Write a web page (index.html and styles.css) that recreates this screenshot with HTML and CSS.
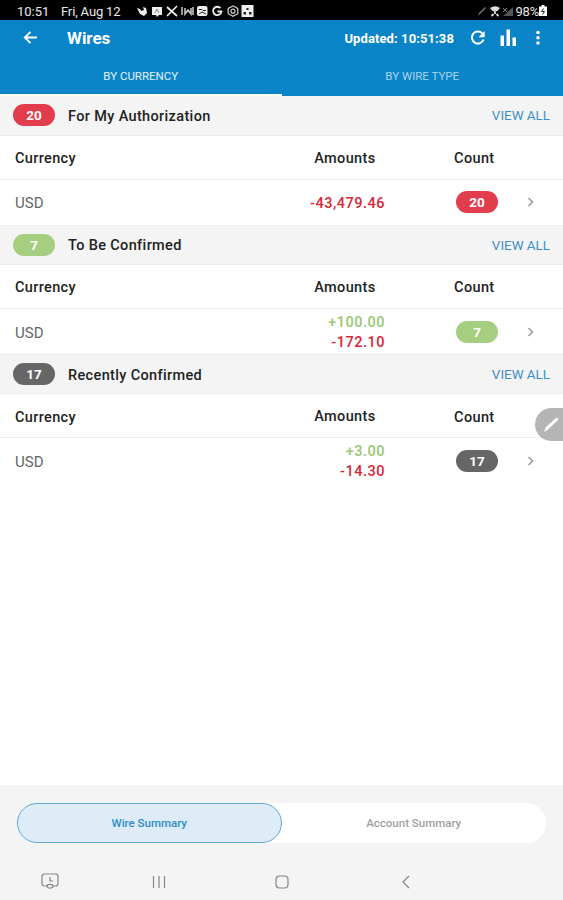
FILE: index.html
```html
<!DOCTYPE html>
<html lang="en">
<head>
    <meta charset="utf-8">
    <title>Wires</title>
    <link rel="stylesheet" href="styles.css">
</head>
<body>

    <div class="status-bar">
        <span class="status-time">10:51</span>
        <span class="status-date">Fri, Aug 12</span>
        <svg class="status-icons" width="118" height="14" viewBox="0 0 118 14" fill="#eee">
            <path d="M1 4l3 1 1 2 3-1-1-3 3 1 1 5-3 3-4-2z"/>
            <path d="M16 3h10v8h-3l-2 2-1-2h-4z"/>
            <path d="M19 9l2-4 2 4" stroke="#888" fill="none"/>
            <path d="M31 3l10 9M41 2L31 12" stroke="#eee" stroke-width="1.7" fill="none"/>
            <path d="M46 3v8M49 4v6l3-4 3 4V4M57 3v8" stroke="#ccc" stroke-width="1.5" fill="none"/>
            <rect x="61" y="2" width="10.5" height="10" rx="2"/>
            <path d="M63 5.500h3l1 1h3M63 10l3-2 4 2" stroke="#222" fill="none"/>
            <path d="M84.500 4.200A4.200 4.200 0 1 0 85.500 7.500H81.500" stroke="#eee" stroke-width="1.800" fill="none"/>
            <path d="M97 2l4.800 2.500v5.200L97 12.300l-4.800-2.600V4.500z" stroke="#ccc" stroke-width="1.300" fill="none"/>
            <circle cx="97" cy="7.200" r="2" stroke="#ccc" stroke-width="1.200" fill="none"/>
            <rect x="105.500" y="1" width="12" height="12"/>
            <path d="M110.500 4h2v2h-2zM107.500 8h2.500v2.500h-2.500zM113 8h2.500v2.500H113z" fill="#222"/>
        </svg>
        <svg class="status-signal" width="40" height="14" viewBox="0 0 40 14">
            <path d="M3 12l1-3 6-6 1 1-6 6z" fill="#777"/>
            <path d="M15 4q5-3.500 10 0l-3 3.500q-2-1.500-4 0z" fill="#ddd"/>
            <path d="M20 7v3M16.500 12l2-2M23.500 12l-2-2" stroke="#ddd" stroke-width="1.800" fill="none"/>
            <path d="M28 12L38 3v9z" fill="#555"/>
            <path d="M28 4l4 4M32 4l-4 4" stroke="#777" fill="none"/>
        </svg>
        <span class="status-battery">98%</span>
        <svg width="8" height="12" viewBox="0 0 8 12">
            <path d="M2.500 0h3v1.500H8V11H0V1.500h2.500z" fill="#fff"/>
            <path d="M4.500 3.500L2.500 6.500h3l-2 3" stroke="#222" fill="none"/>
        </svg>
    </div>

    <header>
        <div class="app-bar">
            <svg class="back" width="16" height="16" viewBox="0 0 16 16">
                <path d="M15 7.500H3M8.500 1.800L2.800 7.500l5.700 5.700" stroke="#fff" stroke-width="1.900" fill="none"/>
            </svg>
            <h1>Wires</h1>
            <span class="updated">Updated: 10:51:38</span>
            <svg class="refresh" width="16" height="16" viewBox="0 0 16 16">
                <path d="M12.200 3.300A6 6 0 1 0 13.600 9.500" stroke="#fff" stroke-width="2" fill="none"/>
                <path d="M14.700 1v6.200H8.500z" fill="#fff"/>
            </svg>
            <svg class="chart" width="18" height="18" viewBox="0 0 18 18" fill="#fff">
                <rect x="0.500" y="6.500" width="3.500" height="10.500"/>
                <rect x="6.500" y="0.500" width="3.500" height="16.500"/>
                <rect x="12.500" y="8.500" width="3.500" height="8.500"/>
            </svg>
            <svg class="more" width="4" height="16" viewBox="0 0 4 16" fill="#fff">
                <circle cx="2" cy="2.500" r="1.800"/>
                <circle cx="2" cy="7.700" r="1.800"/>
                <circle cx="2" cy="13" r="1.800"/>
            </svg>
        </div>
        <div class="tabs">
            <a class="tab active">BY CURRENCY</a>
            <a class="tab">BY WIRE TYPE</a>
        </div>
    </header>

    <main>
        <section>
            <div class="section-head">
                <span class="badge red">20</span>
                <h2>For My Authorization</h2>
                <a class="view-all">VIEW ALL</a>
            </div>
            <div class="row labels">
                <span>Currency</span>
                <span class="amounts">Amounts</span>
                <span class="count">Count</span>
            </div>
            <div class="row">
                <span class="currency">USD</span>
                <div class="amounts"><p class="minus">-43,479.46</p></div>
                <div class="count"><span class="badge red">20</span></div>
                <svg class="chevron" width="8" height="10" viewBox="0 0 8 10"><path d="M1.500 1l4 4-4 4"/></svg>
            </div>
        </section>

        <section>
            <div class="section-head">
                <span class="badge green">7</span>
                <h2>To Be Confirmed</h2>
                <a class="view-all">VIEW ALL</a>
            </div>
            <div class="row labels">
                <span>Currency</span>
                <span class="amounts">Amounts</span>
                <span class="count">Count</span>
            </div>
            <div class="row">
                <span class="currency">USD</span>
                <div class="amounts"><p class="plus">+100.00</p><p class="minus">-172.10</p></div>
                <div class="count"><span class="badge green">7</span></div>
                <svg class="chevron" width="8" height="10" viewBox="0 0 8 10"><path d="M1.500 1l4 4-4 4"/></svg>
            </div>
        </section>

        <section>
            <div class="section-head">
                <span class="badge gray">17</span>
                <h2>Recently Confirmed</h2>
                <a class="view-all">VIEW ALL</a>
            </div>
            <div class="row labels">
                <span>Currency</span>
                <span class="amounts">Amounts</span>
                <span class="count">Count</span>
            </div>
            <div class="row">
                <span class="currency">USD</span>
                <div class="amounts"><p class="plus">+3.00</p><p class="minus">-14.30</p></div>
                <div class="count"><span class="badge gray">17</span></div>
                <svg class="chevron" width="8" height="10" viewBox="0 0 8 10"><path d="M1.500 1l4 4-4 4"/></svg>
            </div>
        </section>
    </main>

    <!-- Floating pen button -->
    <div class="pen">
        <svg width="33" height="33" viewBox="0 0 33 33">
            <path d="M9 24l2-5L21.500 9.500l2 2L13 21.500z" fill="#fff"/>
        </svg>
    </div>

    <footer>
        <div class="switch">
            <button class="selected">Wire Summary</button>
            <button>Account Summary</button>
        </div>
        <div class="nav">
            <svg width="18" height="17" viewBox="0 0 18 17">
                <path d="M6 13H3.500Q1 13 1 10.500V3.500Q1 1 3.500 1h11Q17 1 17 3.500v7Q17 13 14.500 13H12"/>
                <path d="M9 4v4h3"/>
                <ellipse cx="9" cy="13.200" rx="3" ry="1.800"/>
            </svg>
            <svg width="14" height="14" viewBox="0 0 14 14"><path d="M1.500 1v12M7 1v12M12.500 1v12"/></svg>
            <svg width="14" height="14" viewBox="0 0 14 14"><rect x="1" y="1" width="12" height="12" rx="3.500"/></svg>
            <svg width="14" height="14" viewBox="0 0 14 14"><path d="M10 1L4 7l6 6"/></svg>
        </div>
    </footer>

</body>
</html>
```
FILE: styles.css
```css
* {
    box-sizing: border-box;
}
body {
    font-family: Roboto, Arial, sans-serif;
    margin: 0;
    height: 900px;
    display: flex;
    flex-direction: column;
    background-color: #fff;
    color: #222;
    overflow: hidden;
}
h1, h2, p {
    margin: 0;
}
svg {
    display: block;
    flex: none;
}


.status-bar {
    height: 20px;
    padding: 2px 16px 0 17px;
    display: flex;
    align-items: center;
    background-color: #000;
    color: #e8e8e8;
    font-size: 13px;
}
.status-time {
    width: 44px;
}
.status-date {
    width: 75px;
    letter-spacing: -0.15px;
}
.status-signal {
    margin-left: auto;
}
.status-battery {
    margin: 0;
    letter-spacing: -0.2px;
}


header {
    height: 76px;
    background-color: #0a84c8;
    color: #fff;
}
.app-bar {
    height: 36px;
    display: flex;
    align-items: center;
    padding: 0 23px 0 22px;
}
.app-bar h1 {
    margin-left: 29px;
    font-size: 17px;
    font-weight: 700;
}
.updated {
    margin-left: auto;
    font-size: 13px;
    font-weight: 700;
    letter-spacing: 0.1px;
}
.refresh {
    margin-left: 16px;
}
.chart {
    margin-left: 14px;
}
.more {
    margin-left: 18px;
}
.tabs {
    height: 40px;
    display: grid;
    grid-template-columns: 1fr 1fr;
}
.tab {
    display: flex;
    align-items: center;
    justify-content: center;
    padding-top: 1px;
    font-size: 11.5px;
    color: #a9d3ec;
    border-bottom: 2px solid transparent;
}
.tab.active {
    color: #e4f3fb;
    border-bottom-color: #f8fbfd;
}


.section-head {
    height: 40px;
    display: flex;
    align-items: center;
    padding: 0 13px;
    background-color: #f4f4f4;
    border-bottom: 1px solid #ececec;
}
section:first-child .section-head {
    height: 39.66px;
}
section + section .section-head {
    border-top: 1px solid #ececec;
}
.section-head h2 {
    margin-left: 13px;
    padding-top: 2px;
    font-size: 14.5px;
    font-weight: 500;
    letter-spacing: 0.35px;
}
.view-all {
    margin-left: auto;
    padding-top: 1px;
    font-size: 13.4px;
    color: #3a90c8;
}
.badge {
    display: flex;
    align-items: center;
    justify-content: center;
    width: 42px;
    height: 22px;
    border-radius: 11px;
    color: #fff;
    font-size: 13.5px;
    font-weight: 700;
}
.red {
    background-color: #e33c4c;
}
.green {
    background-color: #a5ce80;
}
.gray {
    background-color: #666;
}
.row {
    height: 45.33px;
    display: grid;
    grid-template-columns: 240px 130px 113px 1fr;
    align-items: center;
    padding-left: 15px;
    font-size: 14.5px;
    font-weight: 500;
}
.row.labels {
    height: 44px;
    padding-top: 3px;
    letter-spacing: 0.35px;
    border-bottom: 1px solid #ececec;
}
.labels .amounts {
    padding-right: 9.5px;
}
.labels .count {
    padding-right: 3.5px;
}
.amounts {
    text-align: right;
    line-height: 20px;
}
.amounts p {
    letter-spacing: 0.5px;
}
.row div.amounts {
    padding-top: 3px;
}
.count {
    justify-self: end;
}
.currency {
    padding-top: 2px;
    font-size: 15px;
    font-weight: 400;
    color: #666;
}
.plus {
    color: #98c872;
}
.minus {
    color: #d9263a;
}
.chevron {
    margin-left: 29px;
}
.chevron path {
    fill: none;
    stroke: #999;
    stroke-width: 1.5;
}


.pen {
    position: absolute;
    top: 408px;
    left: 535px;
    width: 28px;
    height: 33px;
    overflow: hidden;
    border-radius: 16.5px 0 0 16.5px;
    background-color: #b5b5b5;
}


footer {
    margin-top: auto;
    height: 115px;
    padding: 18px 17px 0;
    background-color: #f4f4f4;
}
.switch {
    height: 40px;
    display: grid;
    grid-template-columns: 1fr 1fr;
    border-radius: 20px;
    background-color: #fff;
}
.switch button {
    padding: 0;
    border: 1px solid transparent;
    border-radius: 20px;
    background: none;
    font-family: inherit;
    font-size: 11.5px;
    font-weight: 500;
    color: #a0a0a0;
}
.switch .selected {
    border-color: #5fa8d3;
    background-color: #deecf7;
    color: #2a8cc8;
}
.nav {
    display: grid;
    grid-template-columns: 66px 152px 94px 154px;
    height: 77px;
    align-items: center;
    justify-items: center;
}
.nav svg {
    fill: none;
    stroke: #858585;
    stroke-width: 1.2;
}
```
